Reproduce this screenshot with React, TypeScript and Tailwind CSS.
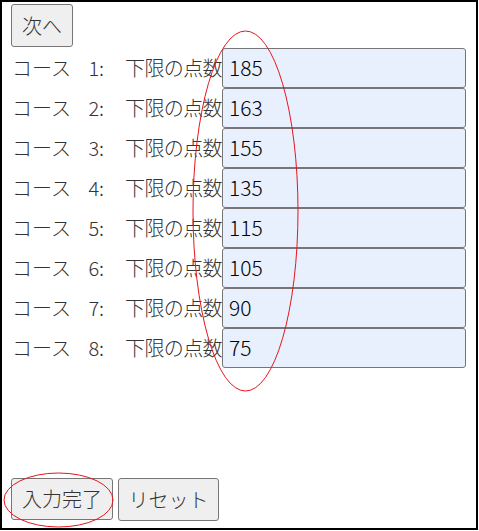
import React from "react";

const rows = [
  { n: 1, v: "185" },
  { n: 2, v: "163" },
  { n: 3, v: "155" },
  { n: 4, v: "135" },
  { n: 5, v: "115" },
  { n: 6, v: "105" },
  { n: 7, v: "90" },
  { n: 8, v: "75" },
];

const font = { fontFamily: '"Noto Sans CJK JP", "Noto Sans", sans-serif' };

export default function App() {
  return (
    <div
      className="relative w-[478px] h-[530px] border-2 border-black bg-white flex flex-col text-[#333] font-light"
      style={font}
    >
      <div className="pl-[9px] pt-[2px]">
        <button className="h-[43px] w-[62px] bg-[#efefef] border border-[#767676] rounded-[3px] text-[20px] leading-none text-[#333] font-light">
          次へ
        </button>
      </div>
      <div className="flex flex-col pl-[10px] mt-[1px]">
        {rows.map((r) => (
          <div key={r.n} className="flex items-center h-[40px]">
            <div className="w-[210px] whitespace-nowrap text-[20px] leading-none flex">
              <span className="w-[60px]">コース</span>
              <span className="w-[54px] pl-[17px]">{r.n}:</span>
              <span className="tracking-[-0.6px]">下限の点数</span>
            </div>
            <input
              readOnly
              value={r.v}
              className="h-[40px] w-[244px] bg-[#e8f0fe] border border-[#767676] rounded-[3px] pl-[6px] pr-[6px] pb-[3px] text-[21px] leading-none text-black font-light outline-none"
              style={font}
            />
          </div>
        ))}
      </div>
      <div className="flex-1" />
      <div className="flex gap-[5px] pl-[9px] pb-[7px]">
        <button className="h-[42px] w-[102px] bg-[#efefef] border border-[#767676] rounded-[3px] text-[20px] leading-none text-[#333] font-light">
          入力完了
        </button>
        <button className="h-[43px] w-[101px] bg-[#efefef] border border-[#767676] rounded-[3px] text-[20px] leading-none text-[#333] font-light">
          リセット
        </button>
      </div>
      <svg
        className="absolute left-[-2px] top-[-2px] pointer-events-none"
        width="478"
        height="530"
      >
        <ellipse cx="245.5" cy="211" rx="52.5" ry="180" fill="none" stroke="#e8141c" strokeWidth="1" />
        <ellipse cx="58.5" cy="500" rx="54.5" ry="27" fill="none" stroke="#e8141c" strokeWidth="1" />
      </svg>
    </div>
  );
}
